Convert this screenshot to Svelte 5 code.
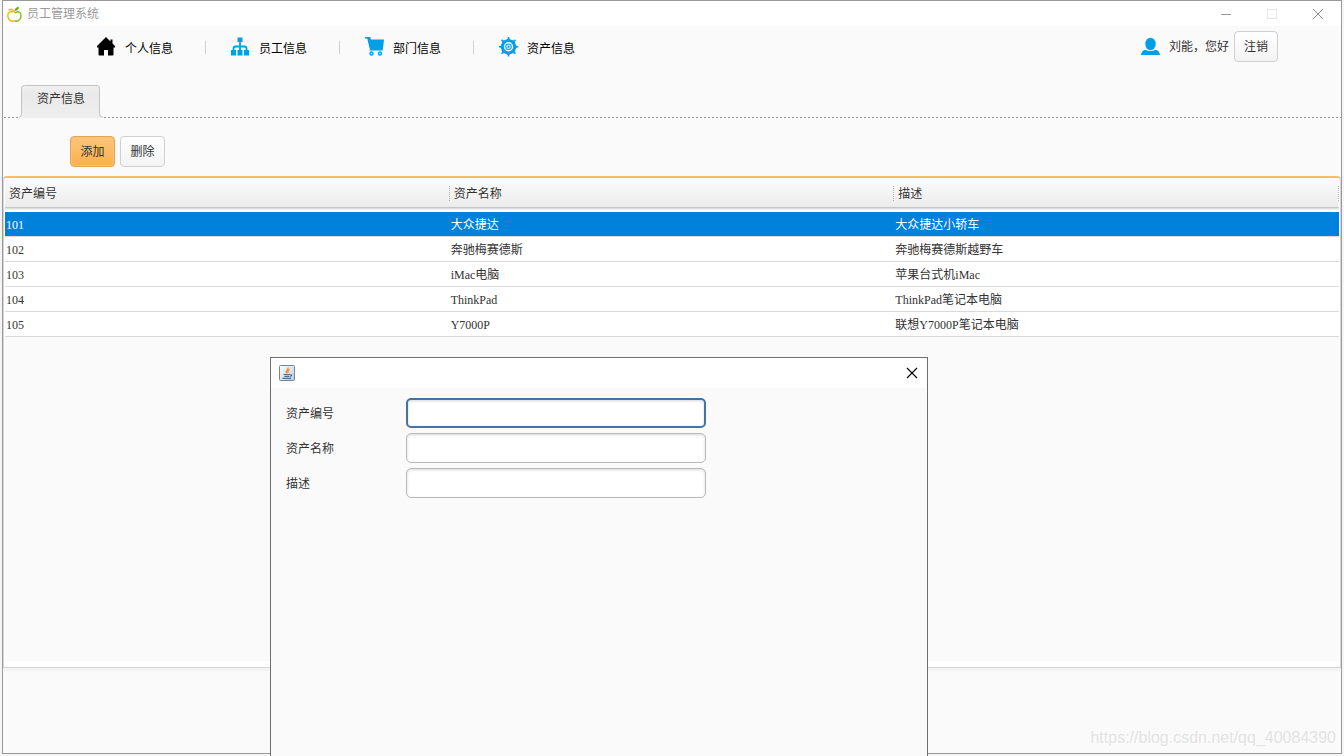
<script lang="ts">
  interface Asset {
    id: string;
    name: string;
    desc: string;
  }

  const menus = [
    { icon: "home", label: "个人信息" },
    { icon: "tree", label: "员工信息" },
    { icon: "cart", label: "部门信息" },
    { icon: "gear", label: "资产信息" },
  ];

  const columns = ["资产编号", "资产名称", "描述"];

  const assets: Asset[] = [
    { id: "101", name: "大众捷达", desc: "大众捷达小轿车" },
    { id: "102", name: "奔驰梅赛德斯", desc: "奔驰梅赛德斯越野车" },
    { id: "103", name: "iMac电脑", desc: "苹果台式机iMac" },
    { id: "104", name: "ThinkPad", desc: "ThinkPad笔记本电脑" },
    { id: "105", name: "Y7000P", desc: "联想Y7000P笔记本电脑" },
  ];

  const teeth = [0, 45, 90, 135, 180, 225, 270, 315];

  let selected = $state("101");
  let activeField = $state(0);
  let form = $state(["", "", ""]);
</script>

<div class="desktop">
  <div class="window">
    <header class="titlebar">
      <svg width="16" height="16" viewBox="0 0 16 16" fill="none" stroke-width="1.4">
        <path d="M6.500 5.800C3.500 4.800.8 6.400.8 9.400c0 3.200 2.200 5.800 4.400 5.800.8 0 1.300-.4 2.300-.4" stroke="#f5b800" />
        <path d="M1.500 4.300q2.200-1.800 4.200-.3t2.300 3" stroke="#f5b800" />
        <path d="M7.500 14.800c1 0 1.500.4 2.300.4 2.200 0 4.200-2.800 4.200-5.800 0-2.600-1.700-3.900-3.800-3.700L8 7" stroke="#7cbf1c" />
        <path d="M7.800 5.200C7.300 2.800 9 1.200 12 .8c.2 2.200-1.200 4-4.200 4.400z" fill="#6cb31e" />
      </svg>
      <span class="title">员工管理系统</span>
      <div class="window-buttons">
        <button aria-label="最小化">
          <svg width="12" height="12"><path d="M1 6.500h10" stroke="#999" /></svg>
        </button>
        <button aria-label="最大化">
          <svg width="12" height="12"><rect x="1.500" y="1.500" width="9" height="9" fill="none" stroke="#e6e6e6" /></svg>
        </button>
        <button aria-label="关闭">
          <svg width="12" height="12"><path d="M1 1l10 10M11 1L1 11" stroke="#888" /></svg>
        </button>
      </div>
    </header>

    <div class="toolbar">
      <nav>
        {#each menus as menu}
          <a href="#{menu.icon}">
            <svg width="20" height="20" viewBox="0 0 20 20" fill="#00a0e9">
              {#if menu.icon === "home"}
                <path fill="#000" d="M9 0L0 9v1.500h1.500v7q0 1 1 1H7V13h4v5.500h4.500q1 0 1-1v-7H18V9l-2.500-2.500V2.500h-2v2z" />
              {:else if menu.icon === "tree"}
                <path d="M6.500 0.500h5v4.500h-5zM0 13h5v5.500H0zM6.500 13h5v5.500h-5zM13 13h5v5.500h-5z" />
                <path d="M9 4v10M2.500 13.500v-2q0-2 2-2h9q2 0 2 2v2" fill="none" stroke="#00a0e9" stroke-width="1.800" />
              {:else if menu.icon === "cart"}
                <path d="M0 0h5.500v1.200l.5 1.300h13L17.800 13H5L2.200 1.500H0z" />
                <path d="M4.500 13h13v1h-13z" opacity=".5" />
                <circle cx="6.500" cy="16.500" r="1.500" fill="#fafafa" stroke="#00a0e9" stroke-width="1.400" />
                <circle cx="15" cy="16.500" r="1.500" fill="#fafafa" stroke="#00a0e9" stroke-width="1.400" />
              {:else}
                {#each teeth as angle}
                  <path d="M7 3.500L8.700 1.500V0h1.600v1.500L12 3.500z" transform="rotate({angle} 9.500 9.800)" />
                {/each}
                <circle cx="9.500" cy="9.800" r="7.600" />
                <circle cx="9.500" cy="9.800" r="4" fill="none" stroke="#fafafa" stroke-width="1.400" />
                <circle cx="9.500" cy="9.800" r="1.700" fill="none" stroke="#d4effb" stroke-width="1.200" />
              {/if}
            </svg>
            <span>{menu.label}</span>
          </a>
        {/each}
      </nav>
      <div class="user">
        <svg width="20" height="20" viewBox="0 0 20 20" fill="#00a0e9">
          <ellipse cx="9.500" cy="7" rx="5.200" ry="6.200" />
          <path d="M4 12.800q5.500 2.400 11 0 3.300.8 4 5.200H0q.7-4.400 4-5.200z" />
        </svg>
        <span>刘能，您好</span>
        <button class="btn">注销</button>
      </div>
    </div>

    <div class="tabs">
      <button class="tab">
        <svg class="tab-shape" width="84" height="33" viewBox="0 0 84 33">
          <defs>
            <linearGradient id="tab-bg" x1="0" y1="0" x2="0" y2="1">
              <stop offset="0" stop-color="#f0f0f0" />
              <stop offset=".3" stop-color="#e9e9e9" />
              <stop offset="1" stop-color="#efefef" />
            </linearGradient>
          </defs>
          <path d="M0 33Q2.500 31.500 2.500 28.500V3.500Q2.500.5 5.500.5H78Q81 .5 81 3.500V28.500Q81 31.500 84 33z" fill="url(#tab-bg)" />
          <path d="M0 32.500Q2.500 31.500 2.500 28.500V3.500Q2.500.5 5.500.5H78Q81 .5 80.500 3.500V28.500Q80.500 31.500 84 32.500" fill="none" stroke="#c4c4c4" />
        </svg>
        <span>资产信息</span>
      </button>
    </div>

    <div class="actions">
      <button class="btn primary">添加</button>
      <button class="btn">删除</button>
    </div>

    <main class="panel">
      <table>
        <thead>
          <tr>
            {#each columns as column}
              <th>{column}</th>
            {/each}
          </tr>
        </thead>
        <tbody>
          {#each assets as asset}
            <tr class:selected={selected === asset.id} onclick={() => (selected = asset.id)}>
              <td>{asset.id}</td>
              <td>{asset.name}</td>
              <td>{asset.desc}</td>
            </tr>
          {/each}
        </tbody>
      </table>
    </main>
  </div>

  <div class="dialog" role="dialog" aria-label="添加">
    <div class="dialog-title">
      <svg width="16" height="16" viewBox="0 0 16 16" fill="none">
        <defs>
          <linearGradient id="cup-bg" x1="0" y1="0" x2="1" y2="1">
            <stop offset="0" stop-color="#fff" />
            <stop offset="1" stop-color="#b9cbdc" />
          </linearGradient>
        </defs>
        <rect x=".5" y=".5" width="15" height="15" rx="1" fill="url(#cup-bg)" stroke="#6f8799" />
        <path d="M9 2.500C10 4.500 6 5.500 7.500 8.200M10.500 4.500C8.500 5.500 8.600 6.500 9 8" stroke="#f08a24" stroke-width="1.300" />
        <path d="M4.500 9.500h6.500M5.300 11.300h5M3.500 13.300h8.500M11.500 9.500q2.500.5-.5 2" stroke="#45709a" stroke-width="1.200" />
      </svg>
      <button aria-label="关闭">
        <svg width="12" height="12"><path d="M1 1l10 10M11 1L1 11" stroke="#000" stroke-width="1.100" /></svg>
      </button>
    </div>
    <form>
      {#each columns as column, i}
        <label for="field-{i}">{column}</label>
        <input
          id="field-{i}"
          type="text"
          class:active={activeField === i}
          bind:value={form[i]}
          onfocus={() => (activeField = i)}
        />
      {/each}
    </form>
  </div>

  <div class="watermark">https://blog.csdn.net/qq_40084390</div>
</div>

<style>
  :global(body) {
    background: #f5f5f5;
  }

  .desktop {
    position: relative;
    display: flex;
    box-sizing: border-box;
    height: 100vh;
    padding: 0 2px 2px;
    overflow: hidden;
    font: 12px/16px "Liberation Serif", "Noto Sans CJK SC", sans-serif;
    color: #323232;
  }

  button,
  input {
    font: inherit;
    color: inherit;
    box-sizing: border-box;
  }

  svg {
    display: block;
    flex-shrink: 0;
  }

  .window {
    flex: 1;
    display: flex;
    flex-direction: column;
    border: 1px solid #999;
    background: #fafafa;
  }

  .titlebar {
    display: flex;
    align-items: center;
    height: 25px;
    padding-left: 4px;
    background: #fff;
    color: #999;
  }

  .title {
    margin-left: 4px;
  }

  .window-buttons {
    display: flex;
    margin-left: auto;
  }

  .window-buttons button,
  .dialog-title button {
    display: flex;
    align-items: center;
    justify-content: center;
    width: 46px;
    height: 24px;
    padding: 0;
    border: 0;
    background: none;
  }

  .toolbar {
    display: flex;
    align-items: flex-start;
    justify-content: space-between;
    height: 54px;
    padding: 5px 63px 0 94px;
  }

  nav {
    display: flex;
    gap: 25px;
    padding-top: 6px;
  }

  nav a {
    display: flex;
    gap: 8px;
    width: 108px;
    color: #000;
    text-decoration: none;
  }

  nav a span {
    padding-top: 4px;
  }

  nav a:not(:last-child) {
    border-right: 1px solid transparent;
    border-image: linear-gradient(transparent 5px, #ccd2d2 5px, #ccd2d2 16px, transparent 16px) 1;
  }

  .user {
    display: flex;
    align-items: center;
  }

  .user span {
    margin: 0 5px 0 8px;
  }

  .btn {
    height: 31px;
    padding: 1px 9px 0;
    border: 1px solid #d0d0d0;
    border-radius: 4px;
    background: linear-gradient(#fff, #f3f3f3);
  }

  .btn.primary {
    border-color: #e2a650;
    background: linear-gradient(#fcc57c, #fbb04a);
    box-shadow: inset 0 0 0 1px #fcc179;
  }

  .tabs {
    height: 33px;
    margin-left: 1px;
    padding-left: 15px;
    background: repeating-linear-gradient(90deg, #999 0 2px, transparent 2px 4px) bottom / 100% 1px no-repeat;
  }

  .tab {
    position: relative;
    width: 84px;
    height: 33px;
    padding: 0 0 5px;
    border: 0;
    background: none;
  }

  .tab-shape {
    position: absolute;
    inset: 0;
  }

  .tab span {
    position: relative;
  }

  .actions {
    display: flex;
    gap: 5px;
    padding: 18px 0 9px 67px;
  }

  .actions .btn {
    width: 45px;
  }

  .panel {
    flex: 1;
    display: flex;
    flex-direction: column;
    margin-bottom: 85px;
    padding: 0 1px 6px;
    border: 1px solid #d6d6d6;
    border-top: 2px solid #ffbc5c;
    border-radius: 4px 4px 0 0;
    background: linear-gradient(#fafafa, #fafafa) content-box, #fff;
    box-shadow: 0 3px 0 #f3f3f3;
  }

  table {
    width: 100%;
    table-layout: fixed;
    border-spacing: 0;
  }

  thead tr {
    background: linear-gradient(#fbfbfb, #ececec 29px, #c6c6c6 29px 30px, #e0e0e0 30px 31px, #f0f0f0 31px 32px, #fff 32px);
  }

  th {
    position: relative;
    height: 32px;
    padding: 0 4px 2px;
    font-weight: normal;
    text-align: left;
  }

  th::after {
    content: "";
    position: absolute;
    top: 8px;
    right: 0;
    width: 1px;
    height: 15px;
    background: repeating-linear-gradient(#b4b4b4 0 1px, transparent 1px 2px);
  }

  td {
    height: 23px;
    padding: 1px 1px 0;
    border-bottom: 1px solid #d9d9d9;
    background: #fff;
  }

  .selected td {
    background: #0081db;
    color: #fff;
  }

  .dialog {
    position: absolute;
    top: 357px;
    bottom: 0;
    left: 270px;
    width: 656px;
    border: 1px solid #6e6e6e;
    border-bottom: 0;
    background: #fafafa;
  }

  .dialog-title {
    display: flex;
    align-items: center;
    justify-content: space-between;
    height: 29px;
    padding: 0 0 1px 8px;
    background: #fff;
  }

  .dialog-title button {
    width: 30px;
  }

  form {
    display: grid;
    grid-template-columns: 120px 300px;
    align-items: center;
    row-gap: 5px;
    padding: 10px 15px;
  }

  label {
    padding-top: 2px;
  }

  input {
    height: 30px;
    padding: 0 8px;
    border: 1px solid #bababa;
    border-radius: 5px;
    outline: 0;
    background: #fff;
    box-shadow: inset 0 1px 3px #d6d6d6;
  }

  input.active {
    border: 2px solid #4773a3;
  }

  .watermark {
    position: absolute;
    right: 8px;
    bottom: 8px;
    font: 16px/20px "Liberation Sans", sans-serif;
    color: #e2e2e2;
    text-shadow: 1px 1px 0 #fff;
  }
</style>
